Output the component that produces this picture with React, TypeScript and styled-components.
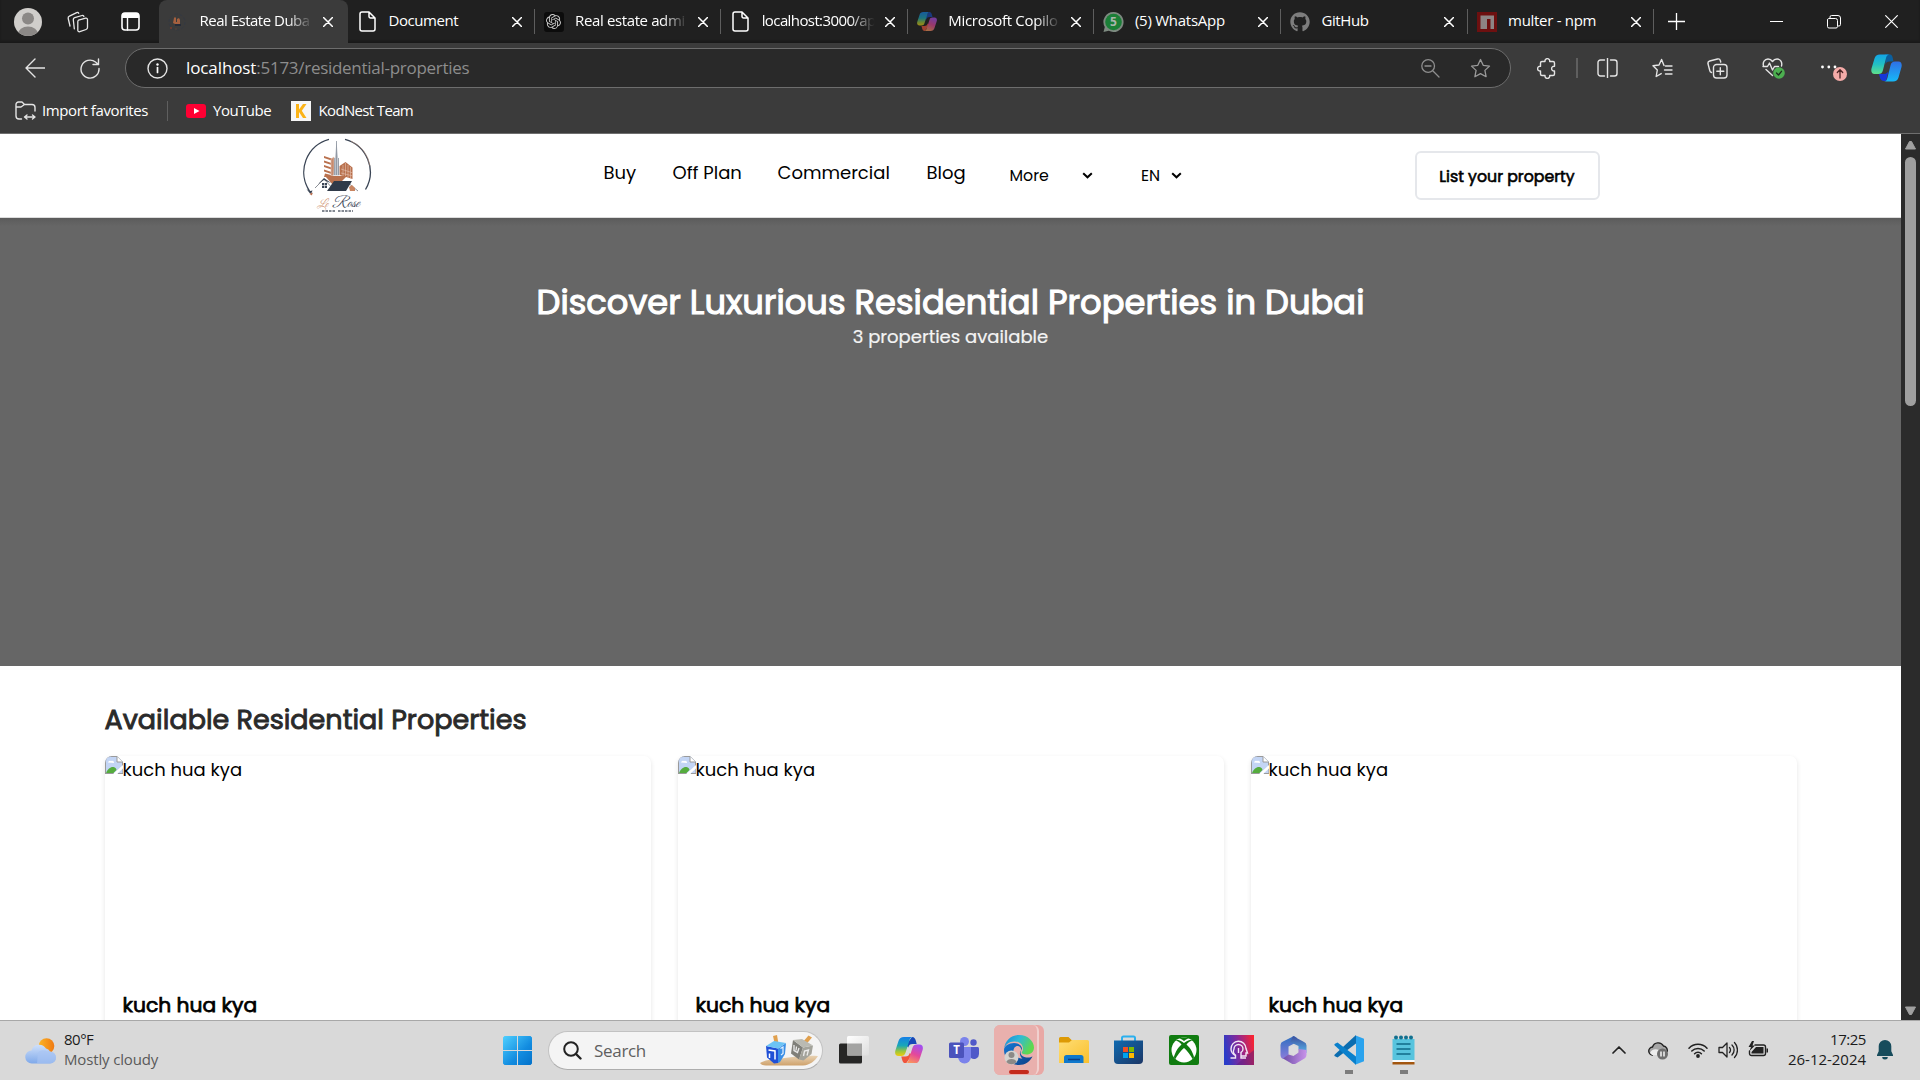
import React from 'react';
import styled, { createGlobalStyle } from 'styled-components';
import { FaGithub } from 'react-icons/fa';
import { SiOpenai } from 'react-icons/si';

const ui = `'Segoe UI', 'Open Sans', 'Noto Sans', sans-serif`;
const brand = `'Poppins', 'Inter', 'Open Sans', sans-serif`;

const GlobalStyle = createGlobalStyle`
  * { box-sizing: border-box; }
  body { margin: 0; background: #fff; }
  h1, h2, h3, p { margin: 0; }
  svg { display: block; flex: none; }
`;

const Desktop = styled.div`
  width: 1920px;
  height: 1080px;
  display: flex;
  flex-direction: column;
  overflow: hidden;
  font-family: ${ui};
`;

/* ---------- Tab strip ---------- */

const TabStrip = styled.div`
  height: 43px;
  flex: none;
  display: flex;
  background: #202020;
  box-shadow: inset 0 -2px 2px #1a1a1a;
`;

const StripTools = styled.div`
  width: 159px;
  display: flex;
  align-items: center;
  padding-left: 14px;
  gap: 24.5px;
  svg:nth-child(3) { margin-left: 7.5px; }
`;

const Tab = styled.div<{ $active?: boolean; $line?: boolean; $width?: number }>`
  width: ${p => p.$width ?? 186.6}px;
  display: flex;
  align-items: center;
  padding: 0 0 0 9px;
  border-radius: ${p => (p.$active ? '8px 8px 0 0' : '0')};
  background: ${p => (p.$active ? '#3b3b3b' : 'none')};
  background-image: ${p => (p.$line ? 'linear-gradient(#5e5e5e, #5e5e5e)' : 'none')};
  background-size: 1px 25px;
  background-position: right 0 top 9px;
  background-repeat: no-repeat;
`;

const Favicon = styled.div`
  width: 20px;
  height: 20px;
  margin-right: 11.5px;
  display: flex;
  justify-content: center;
  align-items: center;
`;

const TabTitle = styled.div<{ $ls: number; $fade?: boolean }>`
  width: 115px;
  white-space: nowrap;
  color: #fff;
  font-size: 15px;
  line-height: 22px;
  margin-top: -3px;
  letter-spacing: ${p => p.$ls}px;
  mask-image: ${p => (p.$fade ? 'linear-gradient(90deg, #000 76%, transparent 98%)' : 'none')};
`;

const TabClose = styled.div`
  margin-left: 8px;
  padding-top: 1px;
`;

const WindowButtons = styled.div`
  display: flex;
  align-items: center;
  flex: 1;
  padding-left: 14px;
`;
const Controls = styled.div`
  display: flex;
  align-items: center;
  gap: 44px;
  margin-left: 85px;
`;

/* ---------- Toolbar and favourites ---------- */

const Toolbar = styled.div`
  height: 48px;
  flex: none;
  display: flex;
  align-items: center;
  background: #3b3b3b;
  padding: 2px 0 0 25px;
`;

const AddressBox = styled.div`
  width: 1386px;
  height: 40px;
  margin: 0 0 0 25px;
  border: 1px solid #6d6d6d;
  border-radius: 20px;
  background: #292929;
  display: flex;
  align-items: center;
  padding: 0 19px 0 21px;
`;

const Url = styled.div`
  flex: 1;
  margin: -1px 0 0 18px;
  font-size: 17px;
  line-height: 24px;
  letter-spacing: -0.28px;
  color: #8d8d8d;
  b { font-weight: 400; color: #fff; letter-spacing: -0.1px; }
`;

const AddressIcons = styled.div`
  display: flex;
  align-items: center;
  gap: 30px;
`;

const ToolIcons = styled.div`
  display: flex;
  align-items: center;
  margin-left: 26px;
`;
const ToolDivider = styled.div`
  width: 2px;
  height: 20px;
  margin: 0 18.5px 0 19px;
  background: #5f5f5f;
`;
const ToolRow = styled.div`
  display: flex;
  align-items: center;
  gap: 34.3px;
`;
const CopilotSlot = styled.div`margin-left: 24.5px;`;

const Favourites = styled.div`
  height: 43px;
  flex: none;
  display: flex;
  align-items: center;
  background: #3b3b3b;
  border-bottom: 1px solid #6e6e6e;
  padding: 0 0 3px 15px;
`;
const Favourite = styled.div<{ $width: number; $gap: number; $ls: number }>`
  width: ${p => p.$width}px;
  display: flex;
  align-items: center;
  gap: ${p => p.$gap}px;
  color: #fff;
  font-size: 15px;
  letter-spacing: ${p => p.$ls}px;
  white-space: nowrap;
  span { line-height: 20px; margin-top: -2px; }
`;
const FavDivider = styled.div`
  width: 1px;
  height: 20px;
  margin-right: 18px;
  background: #5f5f5f;
`;

/* ---------- Page ---------- */

const Viewport = styled.div`
  height: 886px;
  flex: none;
  display: flex;
`;
const Page = styled.div`
  width: 1901px;
  overflow: hidden;
  background: #fff;
  color: #000;
  font-family: ${brand};
  font-feature-settings: 'cv11' 1;
`;

const SiteHeader = styled.header`
  height: 84px;
  display: flex;
  align-items: center;
  padding-left: 301px;
  background: #fff;
  border-bottom: 1px solid #dcdcdc;
`;
const Logo = styled.div`
  width: 72px;
  height: 76px;
`;
const Nav = styled.nav`
  display: flex;
  margin: 0 45px 0 230.5px;
  gap: 36px;
  padding-bottom: 7px;
`;
const NavLink = styled.a<{ $width: number }>`
  width: ${p => p.$width}px;
  font-size: 18px;
  line-height: 27px;
  white-space: nowrap;
`;
const NavSelect = styled.div<{ $width: number }>`
  width: ${p => p.$width}px;
  display: flex;
  align-items: center;
  justify-content: space-between;
  font-size: 15.75px;
  line-height: 22px;
  margin-right: 48px;
`;
const ListButton = styled.button`
  width: 185px;
  height: 49px;
  margin-left: 184.500px;
  padding: 2px 0 0;
  border: 2px solid #e5e7eb;
  border-radius: 6px;
  background: #fff;
  color: #000;
  font: 400 15.75px ${brand};
  font-feature-settings: 'cv11' 1;
  -webkit-text-stroke: 0.6px #000;
`;

const Hero = styled.section`
  height: 448px;
  padding-top: 63px;
  background: linear-gradient(#5b5b5b, #666 8px);
  color: #fff;
  text-align: center;
`;
const HeroTitle = styled.h1`
  font-size: 33.75px;
  line-height: 43px;
  font-weight: 400;
  -webkit-text-stroke: 1.100px #fff;
`;
const HeroNote = styled.p`
  font-size: 18px;
  line-height: 25px;
  color: #f4f4f4;
  -webkit-text-stroke: 0.200px #f4f4f4;
`;

const Listing = styled.section`
  padding: 36px 105px 0 104.5px;
`;
const ListingTitle = styled.h2`
  font-size: 27px;
  line-height: 36px;
  font-weight: 400;
  -webkit-text-stroke: 0.900px #2a2a2a;
  margin-bottom: 18px;
  color: #2a2a2a;
`;
const Cards = styled.div`
  display: grid;
  grid-template-columns: repeat(3, 546px);
  column-gap: 27px;
`;
const Card = styled.article`
  height: 420px;
  border-radius: 7px;
  background: #fff;
  box-shadow: 0 2px 5px rgba(0, 0, 0, 0.11);
  overflow: hidden;
`;
const CardImage = styled.div`
  height: 216px;
  display: flex;
  align-items: flex-start;
  font-size: 18px;
  line-height: 27px;
`;
const CardTitle = styled.h3`
  padding: 19px 18px 0;
  font-size: 20.25px;
  line-height: 28px;
  font-weight: 400;
  -webkit-text-stroke: 0.750px #000;
`;

const Scrollbar = styled.div`
  width: 19px;
  background: #2b2b2b;
  display: flex;
  flex-direction: column;
  align-items: center;
  padding: 6px 0 4px;
`;
const Thumb = styled.div`
  width: 11px;
  height: 249px;
  margin: 7px 0 auto;
  border-radius: 6px;
  background: #9f9f9f;
`;

/* ---------- Taskbar ---------- */

const Taskbar = styled.div`
  height: 60px;
  flex: none;
  display: flex;
  align-items: center;
  background: #d9d9d9;
  border-top: 1px solid #a8a8a8;
`;
const Weather = styled.div`
  width: 503px;
  display: flex;
  align-items: center;
  padding-left: 25px;
  gap: 8px;
  font-size: 15px;
  line-height: 20px;
  color: #1b1b1b;
  p:first-child { letter-spacing: -0.5px; }
  p + p { color: #5a5a5a; letter-spacing: -0.15px; }
`;
const WeatherText = styled.div`margin-top: -4px;`;
const SearchPill = styled.div`
  width: 275px;
  height: 39px;
  margin: 0 3px 0 16px;
  border-radius: 20px;
  background: #f4f4f4;
  border: 1px solid #c2c2c2;
  border-bottom-color: #adadad;
  display: flex;
  align-items: center;
  padding: 0 4px 0 14px;
  span {
    flex: 1;
    margin: -1px 0 0 12px;
    font-size: 17px;
    letter-spacing: -0.31px;
    color: #5f5f5f;
  }
`;
const Apps = styled.div`
  display: flex;
`;
const AppSlot = styled.div<{ $mark?: boolean }>`
  width: 55px;
  height: 59px;
  display: flex;
  align-items: center;
  justify-content: center;
  padding-bottom: 1px;
  background: ${p =>
    p.$mark ? 'radial-gradient(#7c7c7c, #7c7c7c) center 49px / 8px 4px no-repeat' : 'none'};
`;
const EdgeStack = styled.div`
  width: 50px;
  height: 50px;
  border-radius: 6px;
  background: #e9a8a5;
  display: flex;
`;
const EdgeTile = styled.div`
  width: 45px;
  height: 50px;
  padding: 10px 0 0 10px;
  border-radius: 6px;
  border-right: 2px solid #f0d0ce;
  background: #e9b0ad;
`;
const EdgeMark = styled.div`
  width: 20px;
  height: 4px;
  margin: 5px 0 0 5px;
  border-radius: 2px;
  background: #c42b1c;
`;
const Tray = styled.div`
  margin-left: auto;
  display: flex;
  align-items: center;
  padding: 0 27px 1px 0;
`;
const TrayIcons = styled.div`
  display: flex;
  align-items: center;
  gap: 10px;
  margin: 0 0 0 19px;
`;
const Clock = styled.div`
  width: 78px;
  margin: -3px 11px 0 20px;
  text-align: right;
  font-size: 15px;
  line-height: 20px;
  color: #1b1b1b;
  p:first-child { letter-spacing: -0.45px; }
  p + p { letter-spacing: -0.03px; }
`;
const CloudSlot = styled.div`margin-left: 22px;`;

/* ---------- Drawings ---------- */

const line = (color: string, width = 1.4) => ({
  fill: 'none', stroke: color, strokeWidth: width,
  strokeLinecap: 'round' as const, strokeLinejoin: 'round' as const,
});

const CloseX = ({ size = 10, w = 1.5 }: { size?: number; w?: number }) => (
  <svg width={size} height={size} viewBox="0 0 10 10"><path d="M.5.5l9 9M9.5.5l-9 9" {...line('#fff', w)} /></svg>
);

const Avatar = () => (
  <svg width="28" height="28" viewBox="0 0 28 28">
    <defs><clipPath id="av"><circle cx="14" cy="14" r="14" /></clipPath></defs>
    <circle cx="14" cy="14" r="14" fill="#d0cecb" />
    <g clipPath="url(#av)" fill="#8b8886"><circle cx="14" cy="10.5" r="6" /><ellipse cx="14" cy="26" rx="10" ry="7.5" /></g>
  </svg>
);

const Workspaces = () => (
  <svg width="22" height="22" viewBox="0 0 22 22" {...line('#e8e8e8', 1.3)}>
    <path d="M11.500 9.200l7.200-2a1.400 1.400 0 0 1 1.800 1.400v8a2 2 0 0 1-1.400 1.900l-6.300 2.200a1.500 1.500 0 0 1-2-1.400v-8.300a1.900 1.900 0 0 1 .7-1.800z" />
    <path d="M7.300 17.800l-1-9a2 2 0 0 1 1.400-2.100l7.300-2.200a1.500 1.500 0 0 1 1.900 1" />
    <path d="M3 15L1.200 7.500a2 2 0 0 1 1.200-2.300l7.300-3.600a1.500 1.500 0 0 1 2 .7" />
  </svg>
);

const TabActions = () => (
  <svg width="19" height="19" viewBox="0 0 19 19">
    <rect x="1" y="1" width="17" height="17" rx="3" {...line('#fff', 1.6)} />
    <path d="M1 6V3.500A2.500 2.500 0 0 1 3.500 1h12A2.500 2.500 0 0 1 18 3.500V6z" fill="#fff" />
    <path d="M6.500 6v12" {...line('#fff', 1.4)} />
  </svg>
);

const DocIcon = () => (
  <svg width="17" height="21" viewBox="0 0 17 21" {...line('#fff', 1.5)}>
    <path d="M3 1h7l6 6v11a2 2 0 0 1-2 2H3a2 2 0 0 1-2-2V3a2 2 0 0 1 2-2zM10 1v4.500A1.500 1.500 0 0 0 11.500 7H16" />
  </svg>
);

const RoseFavicon = () => (
  <svg width="20" height="20" viewBox="0 0 20 20">
    <circle cx="9" cy="10" r="8" fill="none" stroke="#343942" strokeWidth="1" strokeDasharray="3 2" />
    <path d="M6 6l1-1 1 1v4h1V7l2-1 1 2v4H7l-2-1z" fill="#a5603f" /><path d="M7 12h6v2H7z" fill="#252b38" />
    <circle cx="3" cy="16" r="1" fill="#7a3a2c" /><circle cx="8" cy="17" r=".8" fill="#5f4137" />
  </svg>
);

const GptBox = styled.div`
  width: 20px;
  height: 20px;
  border-radius: 3px;
  background: #0c0c0c;
  color: #c9c9c9;
  display: flex;
  align-items: center;
  justify-content: center;
`;

const WhatsApp = () => (
  <svg width="21" height="20" viewBox="0 0 21 20">
    <path d="M10.500 0a10 10 0 1 1-4.700 18.800L.5 20l1.300-5A10 10 0 0 1 10.500 0z" fill="#7d8a80" />
    <circle cx="10.500" cy="10" r="8.300" fill="#1b7f37" />
    <text x="10.500" y="14.300" textAnchor="middle" fontFamily="Open Sans, sans-serif" fontWeight="700" fontSize="12" fill="#a9b5ac">5</text>
  </svg>
);

const Npm = () => (
  <svg width="20" height="20" viewBox="0 0 20 20"><path d="M0 0h20v20H0z" fill="#6d1010" /><path d="M3.500 3.500h13.500V17h-3.500V7H10v10H3.500z" fill="#8d8585" /></svg>
);

const CopilotColor = ({ size = 28, dim, id }: { size?: number; dim?: boolean; id: string }) => (
  <svg width={size} height={size * 0.95} viewBox="0 0 28 26.500" opacity={dim ? 0.62 : 1}>
    <defs>
      <linearGradient id={`${id}a`} x1="0" y1="0" x2="0" y2="1"><stop offset="0" stopColor="#1480e8" /><stop offset=".45" stopColor="#19a7b8" /><stop offset=".75" stopColor="#9cc63c" /><stop offset="1" stopColor="#f2cc0c" /></linearGradient>
      <linearGradient id={`${id}b`} x1=".7" y1="0" x2=".3" y2="1"><stop offset="0" stopColor="#a24ff0" /><stop offset=".5" stopColor="#e5489a" /><stop offset="1" stopColor="#fb9a5a" /></linearGradient>
    </defs>
    <path d="M17 0c2.500 0 3.300 1.700 4 4.200l.7 2.800h-4c-2.700 0-3.700 1-4.500 3.500L11 8z" fill="#1648b8" />
    <path d="M11 26.500c-2.500 0-3.300-1.700-4-4.200l-.7-2.800h4c2.700 0 3.700-1 4.500-3.500L17 18z" fill="#f0543c" />
    <path d="M9 0h9c-2 0-3 1.400-3.800 4l-3.600 11.500c-.8 2.500-2 3.500-4.500 3.500H3.500C.5 19-.4 16.500.4 13.500L3.500 4C4.400 1.300 6 0 9 0z" fill={`url(#${id}a)`} />
    <path d="M19 26.500h-9c2 0 3-1.400 3.800-4L17.400 11c.8-2.500 2-3.500 4.500-3.500h2.600c3 0 3.900 2.500 3.100 5.500l-3.100 9.500c-.9 2.700-2.500 4-5.500 4z" fill={`url(#${id}b)`} />
  </svg>
);

const CopilotBlue = () => (
  <svg width="31" height="28" viewBox="0 0 31 28">
    <defs>
      <linearGradient id="cba" x1="0" y1="0" x2="0" y2="1"><stop offset="0" stopColor="#12a5e8" /><stop offset=".5" stopColor="#22c0c4" /><stop offset="1" stopColor="#5fe08a" /></linearGradient>
      <linearGradient id="cbb" x1="0" y1="0" x2="0" y2="1"><stop offset="0" stopColor="#2f6fe6" /><stop offset="1" stopColor="#16b9f8" /></linearGradient>
    </defs>
    <path d="M14 .5h4.500c2.500 0 3 1.500 4 7h-4c-2.500 0-3.500 1-4 3z" fill="#0b5f9e" />
    <path d="M8 20h5c2.500 0 4-2 4.500-3L15 27h-2c-3.500 0-4-3-5-7z" fill="#1637d8" />
    <path d="M9 .5h10c-2.500 0-3.500 1.500-4 3.500l-3 12c-.8 3-2.200 4-4.500 4H3.500C.8 20-.2 17.500.5 14.500L3.500 4.500C4.300 2 6 .5 9 .5z" fill="url(#cba)" />
    <path d="M22 27.500H13c2 0 2.800-1.500 3.500-4l3-12c.8-3 2-4 4.500-4h3.500c2.700 0 3.700 2.500 3 5.500l-3 10.500c-.8 2.500-2.500 4-5.500 4z" fill="url(#cbb)" />
  </svg>
);

const Logotype = () => (
  <svg width="72" height="74" viewBox="0 0 72 74">
    <path d="M8.500 53A34 34 0 0 1 28 1.300M44 1.300A34 34 0 0 1 64.500 51.500" fill="none" stroke="#394454" strokeWidth="1.300" />
    <path d="M50 3A34 34 0 0 1 69 28" fill="none" stroke="#c89a82" strokeWidth=".5" />
    <path d="M5.500 51l3.500 2 2.500-.5-1 2.500 1.500 1-3-.5z" fill="#394454" /><path d="M8.500 56l3-1.500-.5 3z" fill="#c0704d" />
    <path d="M23 18l9 3v2l-9-3zM23 22.500l9 3v2l-9-3zM23 27l9 3v2l-9-3zM23 31.500l9 3v2l-9-3zM24 35.500l8 2v1.500h-9zM38.500 28l6-4 7 5.500V41l-13-4z" fill="#b9714e" />
    <path d="M30 21l3-2v18l-3 1zM42 27v11M44.500 25v14M47 27v13M49.500 29v11M40 31l12 4M40 35l12 3" fill="#c68b6e" stroke="#e5c3b2" strokeWidth=".6" />
    <path d="M35.500 3l1 11 1 9 1 14.500h-6l1-14.500 1-9z" fill="#c5cad1" />
    <path d="M35.500 3v34M33.700 20v17M37.500 20v17" stroke="#7b8490" strokeWidth=".7" />
    <path d="M24 38h22l-6 6-8 3z" fill="#b9714e" />
    <path d="M14 50l9-9 10 11M46 44l11 9" fill="none" stroke="#8c8f96" strokeWidth="1" />
    <path d="M17 46l6-6 7 5-3-1-4-2z" fill="#394454" />
    <path d="M33 43l18 0-6 10H26z" fill="#303a49" />
    <path d="M21 45h5v5h-5z" fill="#394454" /><path d="M23.500 45v5M21 47.500h5" stroke="#fff" strokeWidth=".6" />
    <path d="M48 49l3-2 3 3v3h-5z" fill="#c98561" />
    <text x="16" y="68.500" fontFamily="Great Vibes, Dancing Script, Liberation Serif, cursive" fontStyle="italic" fontSize="11" fill="#c98561">Le</text>
    <text x="31" y="68.500" fontFamily="Great Vibes, Dancing Script, Liberation Serif, cursive" fontStyle="italic" fontSize="15" fill="#394454" textLength="27" lengthAdjust="spacingAndGlyphs">Rose</text>
    <path d="M21 73h14M37 73h15" stroke="#5c6470" strokeWidth="1.300" strokeDasharray="2.500 1" />
  </svg>
);

const Chevron = () => (
  <svg width="11" height="7" viewBox="0 0 11 7"><path d="M1.200 1.200L5.500 5.300l4.300-4.100" fill="none" stroke="#000" strokeWidth="2" /></svg>
);

const BrokenImage = () => (
  <svg width="18" height="18" viewBox="0 0 18 18">
    <path d="M0 0h12l6 6v12H0z" fill="#c3d5f5" />
    <path d="M.5 18V5A5 5 0 0 1 5.500.5H12L17.500 6v7" fill="none" stroke="#9a9a9a" />
    <path d="M12 .5V6h5.500" fill="#fff" stroke="#9a9a9a" />
    <path d="M3 6.500a2 2 0 0 1 3-1.500 2 2 0 0 1 3 2z" fill="#fff" />
    <path d="M1 17.500c1-4.500 5-7 7.500-6.500 2 .5 3 2 3 3L8 17.500z" fill="#55ac3e" />
    <path d="M8 18l10-9v3.500L12 18z" fill="#fff" />
    <path d="M0 17.500h8.500M13 17.500h5V13" stroke="#9a9a9a" fill="none" />
  </svg>
);

const BackArrow = () => (
  <svg width="20" height="20" viewBox="0 0 20 20"><path d="M10 1L1 10l9 9M1 10h19" {...line('#e4e4e4', 1.4)} /></svg>
);
const Refresh = styled.div`margin-left: 35px;`;
const RefreshIcon = () => (
  <svg width="20" height="21" viewBox="0 0 20 21"><path d="M19 10.500A9 9 0 1 1 15.500 4l3 2.500M18.500 1v5.500H13" {...line('#e4e4e4', 1.4)} /></svg>
);
const Info = () => (
  <svg width="21" height="21" viewBox="0 0 21 21"><circle cx="10.500" cy="10.500" r="9.500" {...line('#e4e4e4', 1.4)} /><path d="M10.500 9.500v5" {...line('#fff', 1.7)} /><circle cx="10.500" cy="6.500" r="1.200" fill="#fff" /></svg>
);
const ZoomOut = () => (
  <svg width="19" height="19" viewBox="0 0 19 19"><path d="M12 12l6 6M4 7h6M13.500 7a6.300 6.300 0 1 1-12.700 0 6.300 6.300 0 0 1 12.700 0z" {...line('#8e8e8e', 1.3)} /></svg>
);
const starPath = 'M10.500 1.500l2.700 5.800 6.300.8-4.600 4.300 1.200 6.300-5.600-3.100-5.600 3.100 1.200-6.300L1.500 8.100l6.300-.8z';
const Star = () => <svg width="21" height="21" viewBox="0 0 21 21"><path d={starPath} {...line('#9a9a9a', 1.3)} /></svg>;

const Puzzle = () => (
  <svg width="20" height="21" viewBox="0 0 20 21"><path d="M5 3.500h3a2.400 2.400 0 1 1 4.700 0h3.300a1.500 1.500 0 0 1 1.500 1.500v3.300a2.400 2.400 0 1 0 0 4.700v3a1.500 1.500 0 0 1-1.500 1.500h-3.300a2.400 2.400 0 1 1-4.700 0H5A1.500 1.500 0 0 1 3.500 16v-3a2.400 2.400 0 1 1 0-4.700V5A1.500 1.500 0 0 1 5 3.500z" {...line('#e4e4e4', 1.4)} /></svg>
);
const Split = () => (
  <svg width="21" height="20" viewBox="0 0 21 20"><path d="M7.500 2H3.500A2.500 2.500 0 0 0 1 4.500v11A2.500 2.500 0 0 0 3.500 18h4M13.500 2h4A2.500 2.500 0 0 1 20 4.500v11a2.500 2.500 0 0 1-2.500 2.500h-4M10.500 0v20" {...line('#e4e4e4', 1.4)} /></svg>
);
const FavList = () => (
  <svg width="21" height="20" viewBox="0 0 21 20"><path d="M12 7.500L9.600 1.500 7 7l-6 .8 4.300 4.200L4.200 18.500l5-2.900M13.500 8H20M12.500 12H20M13.500 16H20" {...line('#e4e4e4', 1.4)} /></svg>
);
const Collections = () => (
  <svg width="21" height="21" viewBox="0 0 21 21"><path d="M4.500 14.500A3 3 0 0 1 2.700 12.300L1 5.800A2.400 2.400 0 0 1 2.700 3L10.500 1a2.400 2.400 0 0 1 2.900 1.700l.3 1.300M9.500 6.500H17A3 3 0 0 1 20 9.500V17a3 3 0 0 1-3 3H9.500a3 3 0 0 1-3-3V9.500a3 3 0 0 1 3-3zM13.300 9.800v7M9.800 13.300h7" {...line('#e4e4e4', 1.4)} /></svg>
);
const Heart = () => (
  <svg width="23" height="22" viewBox="0 0 23 22">
    <path d="M1.500 9C.5 5.500 2.500 2 6 2c2 0 3.500 1 4.500 2.500C11.500 3 13 2 15 2c3.500 0 5.500 3.500 4.500 7M1 9.500h4.500l2-3.500 3 7 2-3.500h4M4 12.500l6.500 6" {...line('#e4e4e4', 1.4)} />
    <circle cx="17" cy="16" r="5.800" fill="#4caf50" /><path d="M14.500 16l2 2 3-3.700" {...line('#1d2b1d', 1.300)} />
  </svg>
);
const MoreDots = () => (
  <svg width="27" height="28" viewBox="0 0 27 28">
    <circle cx="2.500" cy="13" r="1.400" fill="#fff" /><circle cx="8.800" cy="13" r="1.400" fill="#fff" /><circle cx="15" cy="13" r="1.400" fill="#fff" />
    <circle cx="20" cy="20" r="7" fill="#f4aba8" /><path d="M20 24v-8M17.300 18.500L20 15.800l2.700 2.700" {...line('#4a2424', 1.300)} />
  </svg>
);
const ImportFolder = () => (
  <svg width="21" height="20" viewBox="0 0 21 20"><path d="M6.500 18H4a3 3 0 0 1-3-3V3.500A2.500 2.500 0 0 1 3.500 1H7l2.500 2.500H17a3 3 0 0 1 3 3V10M1 6h5l3.500-2.500M12 14l-2.500 2 2.500 2M17.500 14l2.500 2-2.500 2M9.500 16H20" {...line('#e4e4e4', 1.4)} /></svg>
);
const YouTube = () => (
  <svg width="20" height="14" viewBox="0 0 20 14"><rect width="20" height="14" rx="3" fill="#ff0033" /><path d="M8 4l5.500 3L8 10z" fill="#fff" /></svg>
);
const KodNest = () => (
  <svg width="20" height="20" viewBox="0 0 20 20"><path d="M0 0h20v20H0z" fill="#f6f6f6" /><path d="M5 3h3v5.500L12 3h3.500l-4.700 6.800L15.500 17H12l-4-6v6H5z" fill="#fbb316" /></svg>
);

const Tri = ({ down }: { down?: boolean }) => (
  <svg width="13" height="10" viewBox="0 0 13 10"><path d={down ? 'M1.500 1h10L7.500 8.500h-2z' : 'M1.500 9h10L7.500 1.500h-2z'} fill="#a0a0a0" stroke="#a0a0a0" strokeLinejoin="round" /></svg>
);

const WeatherIcon = () => (
  <svg width="31" height="26" viewBox="0 0 31 26">
    <defs><linearGradient id="wc" x1="0" y1="0" x2="0" y2="1"><stop offset="0" stopColor="#cfe0fa" /><stop offset="1" stopColor="#7fa9ea" /></linearGradient>
      <linearGradient id="ws"><stop offset="0" stopColor="#fbb528" /><stop offset="1" stopColor="#f07a12" /></linearGradient></defs>
    <circle cx="21.500" cy="8" r="7.800" fill="url(#ws)" />
    <path d="M7 25.500a6.500 6.500 0 0 1-.5-13A8 8 0 0 1 21 10.500a6 6 0 0 1 4 3 6 6 0 0 1 0 12z" fill="url(#wc)" />
    <path d="M13 14.500a6.500 6.500 0 0 1 9-1 6 6 0 0 1 3 0 6 6 0 0 1 0 12H12" fill="#a9c5f3" opacity=".65" />
  </svg>
);
const Windows = () => (
  <svg width="29" height="29" viewBox="0 0 29 29">
    <defs><linearGradient id="win" x1="0" y1="0" x2="1" y2="1"><stop offset="0" stopColor="#4fd0ff" /><stop offset=".6" stopColor="#128ce0" /><stop offset="1" stopColor="#0471c9" /></linearGradient></defs>
    <path d="M1.500 0H14v14H0V1.500zM15 0h12.500L29 1.500V14H15zM0 15h14v14H1.500L0 27.500zM15 15h14v12.500L27.500 29H15z" fill="url(#win)" />
  </svg>
);
const SearchIcon = () => (
  <svg width="19" height="19" viewBox="0 0 19 19"><circle cx="8" cy="8" r="6.800" fill="none" stroke="#222" strokeWidth="2" /><path d="M13 13l4.500 4.500" stroke="#222" strokeWidth="2.400" strokeLinecap="round" /></svg>
);
const Dreidels = () => (
  <svg width="58" height="33" viewBox="0 0 58 33">
    <defs><linearGradient id="sand" x1="0" y1="0" x2="0" y2="1"><stop offset="0" stopColor="#e8d2b3" /><stop offset="1" stopColor="#cfa26c" /></linearGradient></defs>
    <path d="M0 29c5-3 12-4 18-4 14-2 26-4 40-3-3 5-8 9-15 9.500H6c-3 0-5-1-6-2.500z" fill="url(#sand)" />
    <path d="M13 2l4-1 1.500 9-3.500 1z" fill="#e0a04e" />
    <path d="M6 12l12 2.500V29l-4 .5-7-6z" fill="#2050d6" /><path d="M18 14.500L26 9l-1 11-5 8-2 1z" fill="#3b8fe6" /><path d="M6 12l8-5 12 2-8 5.500z" fill="#6cc3f5" />
    <path d="M8.500 16l6.500 1v8.500M9.500 19.500v4.500" fill="none" stroke="#fff" strokeWidth="1.500" /><path d="M20.500 14.500l2.500-1.500v6.500l-2 1.500" fill="none" stroke="#e6f2ff" strokeWidth="1.200" />
    <path d="M48.500 1.500l3.500 2-6 7-3.500-2z" fill="#e0a04e" />
    <path d="M33 6l10 7.500-4 12-8-6z" fill="#7f7f79" /><path d="M43 13.500l10-2L51.500 20l-8 6.500-4.500-1z" fill="#a3a39b" /><path d="M33 6l9-1 11 6.500-10 2z" fill="#babab2" />
    <path d="M34 11l0 5.500 3.500 2 1.500-4.500M36.500 12.500l-.5 4M43.500 22l1-5 4-1-1.500 5.500" fill="none" stroke="#ececec" strokeWidth="1.300" />
  </svg>
);
const TaskView = () => (
  <svg width="30" height="28" viewBox="0 0 30 28">
    <defs><linearGradient id="tvl" x1="0" y1="0" x2="1" y2="1"><stop offset="0" stopColor="#fff" /><stop offset="1" stopColor="#dedede" /></linearGradient></defs>
    <rect x="0" y="7.500" width="23" height="20" rx="1.500" fill="#262625" /><rect x="8" y="0" width="22" height="19.500" rx="1.500" fill="url(#tvl)" /><path d="M8 7.500h15v12H8z" fill="#a3a3a2" />
  </svg>
);
const Teams = () => (
  <svg width="30" height="27" viewBox="0 0 30 27">
    <circle cx="24.500" cy="5.500" r="3.200" fill="#5059c9" /><path d="M20 10h8.500c.8 0 1.500.6 1.500 1.500V17a5 5 0 0 1-8 4z" fill="#5059c9" />
    <circle cx="15.500" cy="4.500" r="4.500" fill="#7b83eb" /><path d="M9 10h13v10a6.500 6.500 0 0 1-13 0z" fill="#7b83eb" />
    <rect x="0" y="5.500" width="15" height="15.500" rx="1.500" fill="#4b53bc" />
    <text x="7.500" y="17.300" textAnchor="middle" fontFamily="Open Sans, sans-serif" fontWeight="700" fontSize="11.500" fill="#fff">T</text>
  </svg>
);
const Edge = () => (
  <svg width="30" height="30" viewBox="0 0 30 30">
    <defs>
      <linearGradient id="eg" x1="0" y1="0" x2="1" y2=".4"><stop offset="0" stopColor="#1a86d4" /><stop offset=".5" stopColor="#2fb9d8" /><stop offset="1" stopColor="#5fd84e" /></linearGradient>
      <linearGradient id="ed" x1="0" y1="0" x2="1" y2="1"><stop offset="0" stopColor="#1478d4" /><stop offset="1" stopColor="#0f3f86" /></linearGradient>
    </defs>
    <path d="M0 15c0-4 5-7 10-7 5 0 8 3 8 5.500 0 1-1.500 2-1.500 4 0 3 3.500 5 7.500 5 2 0 3.500-.5 4.500-1C26 26.500 21 30 15 30 6 30 0 23 0 15z" fill="url(#ed)" />
    <path d="M10.500 12.500c-1.500 2-1.500 5 0 7 2 3 5.500 4 8 4-1.500-1-3-3.500-2.500-6 .3-1 1.200-2 1.200-3 0-1.800-1.800-3.500-3.500-3.500-1.200 0-2.500.6-3.200 1.500z" fill="#e9b0ad" />
    <path d="M.1 14C.8 6 7 0 15 0c9 0 15 6.500 15 12.500 0 4.500-3.500 7-7.500 7-3 0-4.800-1-4.800-2 0-.8 1.300-1.300 1.300-4C19 9.500 15 6.500 10.500 6.500 5 6.500 1 10 .1 14z" fill="url(#eg)" />
    <circle cx="7.500" cy="22.500" r="7" fill="#d5d3d0" /><circle cx="7.500" cy="20" r="3" fill="#8c8987" /><path d="M2.300 27a5.500 4.500 0 0 1 10.400 0 7 7 0 0 1-10.400 0z" fill="#8c8987" />
  </svg>
);
const Folder = () => (
  <svg width="30" height="28" viewBox="0 0 30 28">
    <defs><linearGradient id="fo" x1="0" y1="0" x2="1" y2="1"><stop offset="0" stopColor="#ffdd75" /><stop offset="1" stopColor="#f9c02c" /></linearGradient></defs>
    <path d="M0 2.500A1.500 1.500 0 0 1 1.500 1h8l3 3H28v6H0z" fill="#dd9a05" /><path d="M0 6.500h10l3-2.500h15.500A1.500 1.500 0 0 1 30 5.500V27H0z" fill="url(#fo)" />
    <path d="M5 27v-5.500A2.500 2.500 0 0 1 7.500 19H22a2.500 2.500 0 0 1 2.500 2.500V27z" fill="#0f78cc" /><path d="M9 23.500h12" stroke="#0b3f86" strokeWidth="1.500" />
  </svg>
);
const Store = () => (
  <svg width="29" height="30" viewBox="0 0 29 30">
    <defs><linearGradient id="st" x1="0" y1="0" x2="1" y2="1"><stop offset="0" stopColor="#0f6ab0" /><stop offset="1" stopColor="#1c3766" /></linearGradient></defs>
    <path d="M8 7V3a1.500 1.500 0 0 1 1.500-1.500h10A1.500 1.500 0 0 1 21 3v4" fill="none" stroke="#2bb0ee" strokeWidth="2" />
    <path d="M0 5.500h29V25a4 4 0 0 1-4 4H4a4 4 0 0 1-4-4z" fill="url(#st)" />
    <path d="M9 12h5v5H9z" fill="#f25022" /><path d="M15 12h5v5h-5z" fill="#7fba00" /><path d="M9 18h5v5H9z" fill="#00a4ef" /><path d="M15 18h5v5h-5z" fill="#ffb900" />
  </svg>
);
const Xbox = () => (
  <svg width="30" height="30" viewBox="0 0 30 30">
    <defs><clipPath id="xb"><circle cx="15" cy="15" r="12.500" /></clipPath></defs>
    <rect width="30" height="30" rx="2" fill="#107c10" /><circle cx="15" cy="15" r="12.500" fill="#fff" />
    <g clipPath="url(#xb)" fill="#107c10">
      <path d="M7 2.500c3 .3 6 2 8 3.500 2-1.500 5-3.200 8-3.500V0H7z" />
      <path d="M5.500 5c3 .5 5.500 2.500 7 4.500C8.500 13 5 19 4.500 25L6 25c2-4.500 6-9.500 9-12 3 2.500 7 7.500 9 12l1.500 0c-.5-6-4-12-8-15.500 1.500-2 4-4 7-4.500-3-1-6.500.5-9.500 3-3-2.500-6.500-4-9.500-3z" />
    </g>
  </svg>
);
const HeadApp = () => (
  <svg width="30" height="30" viewBox="0 0 30 30">
    <defs><linearGradient id="ha" x1="0" y1=".4" x2="1" y2=".2"><stop offset="0" stopColor="#2a3cc8" /><stop offset=".5" stopColor="#8a2796" /><stop offset="1" stopColor="#fb2430" /></linearGradient></defs>
    <path d="M0 0h30v30H0z" fill="url(#ha)" /><path d="M18 25l12-10v15H12z" fill="#5b1f7c" opacity=".5" />
    <path d="M6.500 23h5v-2.500c-3-1.500-4.500-3.500-4.500-6.500A7.500 7.500 0 0 1 22 13.500l1.500 4.500H22v3h-5M12 20.500A5 5 0 0 1 10 14a4.500 4.500 0 0 1 9 0c0 2-1 3-2 3.500v5.500h5M14.500 13v5" fill="none" stroke="#f1e6f5" strokeWidth="1.400" />
  </svg>
);
const M365 = () => (
  <svg width="27" height="28" viewBox="0 0 27 28">
    <defs><linearGradient id="ma" x1="0" y1="0" x2="0" y2="1"><stop offset="0" stopColor="#2c6fc0" /><stop offset="1" stopColor="#8b7ddb" /></linearGradient>
      <linearGradient id="mb" x1="0" y1="0" x2="0" y2="1"><stop offset="0" stopColor="#3b4d9c" /><stop offset="1" stopColor="#58b4ea" /></linearGradient>
      <linearGradient id="mc"><stop offset="0" stopColor="#6f4fa8" /><stop offset="1" stopColor="#c893ea" /></linearGradient></defs>
    <path d="M14 0L3 5.500A4 4 0 0 0 .5 9v10c0 2 1 3 2.500 4l5.500-3.500V10.500L17 6V2z" fill="url(#ma)" />
    <path d="M13 0l11 6a4 4 0 0 1 2.500 3.500V17l-8-3.500V10L10 6z" fill="url(#mb)" />
    <path d="M26.500 14v5a4 4 0 0 1-2 3.500L16 27.500a4 4 0 0 1-4.500 0L3 22.500l5.500-4 5 1.500 5-3.500V13z" fill="url(#mc)" />
    <path d="M13.500 9.300l4.500 2.500v5l-4.500 2.500L9 16.800v-5z" fill="#dcdcde" />
  </svg>
);
const VSCode = () => (
  <svg width="30" height="30" viewBox="0 0 30 30">
    <path d="M22 0v8.500L3.500 22.500 1 21.200a1 1 0 0 1-.2-1.600z" fill="#0b6db0" /><path d="M22 30v-8.500L3.500 7.500 1 8.800a1 1 0 0 0-.2 1.600z" fill="#0a80cc" />
    <path d="M21 .2L30 3.700v22.600l-9 3.500c.7 0 1-.5 1-1.300v-27C22 .7 21.700.2 21 .2z" fill="#2aa3ee" />
  </svg>
);
const Notepad = () => (
  <svg width="23" height="30" viewBox="0 0 23 30">
    <path d="M.5 4h22v21h-22z" fill="#58c4de" /><path d="M.5 25h22v2.500h-22z" fill="#fafafa" /><path d="M.5 27h22v2.500h-22z" fill="#a2560f" />
    <g fill="#12708f"><circle cx="4" cy="2.500" r="2" /><circle cx="9" cy="2.500" r="2" /><circle cx="14" cy="2.500" r="2" /><circle cx="19" cy="2.500" r="2" /></g>
    <path d="M4.500 9h14M4.500 14h14M4.500 19h14" stroke="#0f6a88" strokeWidth="1.700" />
  </svg>
);

const UpChevron = () => <svg width="14" height="8" viewBox="0 0 14 8"><path d="M1 7l6-6 6 6" {...line('#222', 1.7)} /></svg>;
const CloudPause = () => (
  <svg width="21" height="19" viewBox="0 0 21 19">
    <path d="M5 14a4 4 0 0 1-.5-8 6 6 0 0 1 11-1A4.500 4.500 0 0 1 19 11" fill="#a6a6a6" stroke="#222" strokeWidth="1.400" />
    <path d="M2 12c1-3 5-5 9-3l-2 5H4z" fill="#ededed" /><circle cx="14.500" cy="13" r="5.500" fill="#6f6f6f" /><path d="M13 10.500v5M16 10.500v5" stroke="#fff" strokeWidth="1.400" />
  </svg>
);
const Wifi = () => (
  <svg width="20" height="16" viewBox="0 0 20 16"><path d="M1 6.200a12.500 12.500 0 0 1 18 0M3.800 9a8.700 8.700 0 0 1 12.400 0M6.600 11.700a4.800 4.800 0 0 1 6.800 0" {...line('#222', 1.5)} /><circle cx="10" cy="14" r="1.900" fill="#222" /></svg>
);
const Volume = () => (
  <svg width="20" height="18" viewBox="0 0 20 18"><path d="M1 6.500h3.500L9 2v14l-4.500-4.500H1zM11.500 6.500a4 4 0 0 1 0 5M14 4a7 7 0 0 1 0 10M16.500 1.500a11 11 0 0 1 0 15" {...line('#222', 1.3)} /></svg>
);
const Battery = () => (
  <svg width="20" height="18" viewBox="0 0 20 18"><path d="M7 4h8.500A2 2 0 0 1 17.500 6v6.500a2 2 0 0 1-2 2h-12a2 2 0 0 1-2-2V10" {...line('#222', 1.4)} /><path d="M8 6h7.500v6.500h-12V11zM18.500 7.500H20v4h-1.500zM4 0L.5 6H3L1.500 10 7 4.500H4.500L6 0z" fill="#222" /></svg>
);
const Bell = () => (
  <svg width="16" height="20" viewBox="0 0 16 20"><path d="M8 0a6.300 6.300 0 0 1 6.300 6.300v5L16 15v1H0v-1l1.700-3.700v-5A6.300 6.300 0 0 1 8 0zM5.200 17h5.600a2.800 2.500 0 0 1-5.600 0z" fill="#174c5c" /></svg>
);

/* ---------- Content ---------- */

const tabs: { title: string; ls: number; fade?: boolean; icon: React.ReactNode }[] = [
  { title: 'Document', ls: -0.45, icon: <DocIcon /> },
  { title: 'Real estate admi', ls: -0.38, fade: true, icon: <GptBox><SiOpenai size={15} /></GptBox> },
  { title: 'localhost:3000/ap', ls: -0.6, fade: true, icon: <DocIcon /> },
  { title: 'Microsoft Copilo', ls: -0.3, fade: true, icon: <CopilotColor size={20} dim id="tabcp" /> },
  { title: '(5) WhatsApp', ls: -0.25, icon: <WhatsApp /> },
  { title: 'GitHub', ls: -0.4, icon: <FaGithub size={20} color="#7d7d7d" /> },
  { title: 'multer - npm', ls: -0.3, icon: <Npm /> },
];

const links: [string, number][] = [
  ['Buy', 33],
  ['Off Plan', 69],
  ['Commercial', 113],
  ['Blog', 38],
];

const properties = ['kuch hua kya', 'kuch hua kya', 'kuch hua kya'];

export default function App() {
  return (
    <Desktop>
      <GlobalStyle />
      <TabStrip>
        <StripTools>
          <Avatar />
          <Workspaces />
          <TabActions />
        </StripTools>
        <Tab $active $width={189}>
          <Favicon><RoseFavicon /></Favicon>
          <TabTitle $ls={-0.5} $fade>Real Estate Duba</TabTitle>
          <TabClose><CloseX /></TabClose>
        </Tab>
        {tabs.map(t => (
          <Tab key={t.title} $line>
            <Favicon>{t.icon}</Favicon>
            <TabTitle $ls={t.ls} $fade={t.fade}>{t.title}</TabTitle>
            <TabClose><CloseX /></TabClose>
          </Tab>
        ))}
        <WindowButtons>
          <svg width="17" height="17" viewBox="0 0 17 17"><path d="M8.500 0v17M0 8.500h17" {...line('#fff', 1.3)} /></svg>
          <Controls>
            <svg width="13" height="13" viewBox="0 0 13 13"><path d="M0 6.500h13" stroke="#fff" /></svg>
            <svg width="14" height="14" viewBox="0 0 14 14"><path d="M1.500 3.500h7a2 2 0 0 1 2 2v6a1.500 1.500 0 0 1-1.500 1.500H2a1.500 1.500 0 0 1-1.500-1.500V5a1.500 1.500 0 0 1 1-1.500M3 3V2a1.500 1.500 0 0 1 1.500-1.500H11A2.500 2.500 0 0 1 13.500 3v6.500A1.500 1.500 0 0 1 12 11h-1" fill="none" stroke="#fff" /></svg>
            <CloseX size={13} w={0.9} />
          </Controls>
        </WindowButtons>
      </TabStrip>

      <Toolbar>
        <BackArrow />
        <Refresh><RefreshIcon /></Refresh>
        <AddressBox>
          <Info />
          <Url><b>localhost</b>:5173/residential-properties</Url>
          <AddressIcons><ZoomOut /><Star /></AddressIcons>
        </AddressBox>
        <ToolIcons>
          <Puzzle />
          <ToolDivider />
          <ToolRow><Split /><FavList /><Collections /><Heart /><MoreDots /></ToolRow>
          <CopilotSlot><CopilotBlue /></CopilotSlot>
        </ToolIcons>
      </Toolbar>

      <Favourites>
        <Favourite $width={152} $gap={6} $ls={-0.4}><ImportFolder /><span>Import favorites</span></Favourite>
        <FavDivider />
        <Favourite $width={105} $gap={7} $ls={-0.5}><YouTube /><span>YouTube</span></Favourite>
        <Favourite $width={140} $gap={7.5} $ls={-0.65}><KodNest /><span>KodNest Team</span></Favourite>
      </Favourites>

      <Viewport>
        <Page>
          <SiteHeader>
            <Logo><Logotype /></Logo>
            <Nav>
              {links.map(([label, width]) => (
                <NavLink key={label} $width={width}>{label}</NavLink>
              ))}
            </Nav>
            <NavSelect $width={83.5}>More<Chevron /></NavSelect>
            <NavSelect $width={41}>EN<Chevron /></NavSelect>
            <ListButton>List your property</ListButton>
          </SiteHeader>
          <Hero>
            <HeroTitle>Discover Luxurious Residential Properties in Dubai</HeroTitle>
            <HeroNote>3 properties available</HeroNote>
          </Hero>
          <Listing>
            <ListingTitle>Available Residential Properties</ListingTitle>
            <Cards>
              {properties.map((name, i) => (
                <Card key={i}>
                  <CardImage><BrokenImage />{name}</CardImage>
                  <CardTitle>{name}</CardTitle>
                </Card>
              ))}
            </Cards>
          </Listing>
        </Page>
        <Scrollbar><Tri /><Thumb /><Tri down /></Scrollbar>
      </Viewport>

      <Taskbar>
        <Weather>
          <WeatherIcon />
          <WeatherText><p>80°F</p><p>Mostly cloudy</p></WeatherText>
        </Weather>
        <Windows />
        <SearchPill><SearchIcon /><span>Search</span><Dreidels /></SearchPill>
        <Apps>
          <AppSlot><TaskView /></AppSlot>
          <AppSlot><CopilotColor id="taskcp" /></AppSlot>
          <AppSlot><Teams /></AppSlot>
          <AppSlot>
            <EdgeStack><EdgeTile><Edge /><EdgeMark /></EdgeTile></EdgeStack>
          </AppSlot>
          <AppSlot><Folder /></AppSlot>
          <AppSlot><Store /></AppSlot>
          <AppSlot><Xbox /></AppSlot>
          <AppSlot><HeadApp /></AppSlot>
          <AppSlot><M365 /></AppSlot>
          <AppSlot $mark><VSCode /></AppSlot>
          <AppSlot $mark><Notepad /></AppSlot>
        </Apps>
        <Tray>
          <UpChevron />
          <CloudSlot><CloudPause /></CloudSlot>
          <TrayIcons><Wifi /><Volume /><Battery /></TrayIcons>
          <Clock><p>17:25</p><p>26-12-2024</p></Clock>
          <Bell />
        </Tray>
      </Taskbar>
    </Desktop>
  );
}
